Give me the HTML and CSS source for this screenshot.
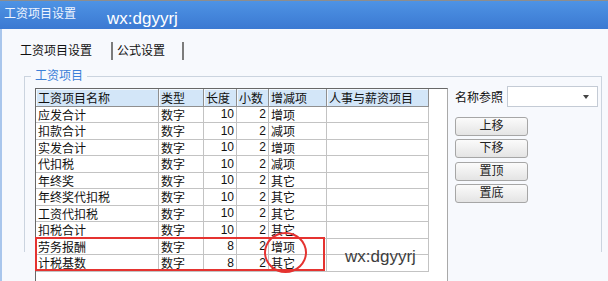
FILE: index.html
```html
<!DOCTYPE html>
<html lang="zh-CN">
<head>
    <meta charset="UTF-8">
    <title>工资项目设置</title>
    <link rel="stylesheet" href="styles.css">
</head>
<body>
    <!-- Title bar -->
    <div class="titlebar">
        <span class="title">工资项目设置</span>
        <span class="title-mark">wx:dgyyrj</span>
    </div>

    <div class="window">
        <!-- Tabs -->
        <div class="tabs">
            <span class="tab tab-first">工资项目设置</span>
            <span class="tab tab-second">公式设置</span>
        </div>

        <!-- Group box -->
        <div class="group">
            <div class="legend">工资项目</div>

            <div class="grid">
                <div class="row head">
                    <div class="cell">工资项目名称</div>
                    <div class="cell">类型</div>
                    <div class="cell">长度</div>
                    <div class="cell">小数</div>
                    <div class="cell">增减项</div>
                    <div class="cell">人事与薪资项目</div>
                </div>
                <div class="row">
                    <div class="cell">应发合计</div><div class="cell">数字</div>
                    <div class="cell num">10</div><div class="cell num">2</div>
                    <div class="cell">增项</div><div class="cell"></div>
                </div>
                <div class="row">
                    <div class="cell">扣款合计</div><div class="cell">数字</div>
                    <div class="cell num">10</div><div class="cell num">2</div>
                    <div class="cell">减项</div><div class="cell"></div>
                </div>
                <div class="row">
                    <div class="cell">实发合计</div><div class="cell">数字</div>
                    <div class="cell num">10</div><div class="cell num">2</div>
                    <div class="cell">增项</div><div class="cell"></div>
                </div>
                <div class="row">
                    <div class="cell">代扣税</div><div class="cell">数字</div>
                    <div class="cell num">10</div><div class="cell num">2</div>
                    <div class="cell">减项</div><div class="cell"></div>
                </div>
                <div class="row">
                    <div class="cell">年终奖</div><div class="cell">数字</div>
                    <div class="cell num">10</div><div class="cell num">2</div>
                    <div class="cell">其它</div><div class="cell"></div>
                </div>
                <div class="row">
                    <div class="cell">年终奖代扣税</div><div class="cell">数字</div>
                    <div class="cell num">10</div><div class="cell num">2</div>
                    <div class="cell">其它</div><div class="cell"></div>
                </div>
                <div class="row">
                    <div class="cell">工资代扣税</div><div class="cell">数字</div>
                    <div class="cell num">10</div><div class="cell num">2</div>
                    <div class="cell">其它</div><div class="cell"></div>
                </div>
                <div class="row">
                    <div class="cell">扣税合计</div><div class="cell">数字</div>
                    <div class="cell num">10</div><div class="cell num">2</div>
                    <div class="cell">其它</div><div class="cell"></div>
                </div>
                <div class="row">
                    <div class="cell">劳务报酬</div><div class="cell">数字</div>
                    <div class="cell num">8</div><div class="cell num">2</div>
                    <div class="cell">增项</div><div class="cell"></div>
                </div>
                <div class="row">
                    <div class="cell">计税基数</div><div class="cell">数字</div>
                    <div class="cell num">8</div><div class="cell num">2</div>
                    <div class="cell">其它</div><div class="cell"></div>
                </div>
            </div>

            <!-- Side controls -->
            <div class="side">
                <div class="ref">
                    <span class="ref-label">名称参照</span>
                    <div class="combo"><span class="arrow"></span></div>
                </div>
                <button class="btn">上移</button>
                <button class="btn">下移</button>
                <button class="btn">置顶</button>
                <button class="btn">置底</button>
            </div>
        </div>
    </div>

    <!-- Annotations drawn over the screenshot -->
    <div class="mark-box"></div>
    <div class="mark-circle"></div>
    <div class="mark-text">wx:dgyyrj</div>
</body>
</html>
```

FILE: styles.css
```css
body {
    margin: 0;
    width: 608px;
    height: 281px;
    overflow: hidden;
    position: relative;
    font-family: "Liberation Sans", "Noto Sans CJK SC", sans-serif;
    font-size: 12px;
    color: #111;
    background-color: #f7f9fd;
}
.titlebar {
    height: 28px;
    border-top: 1px solid #8d8d8d;
    background: linear-gradient(#4e93e4, #3b79d2);
    display: flex;
    align-items: flex-start;
    color: #fff;
}
.title {
    margin: 5px 0 0 4px;
    line-height: 16px;
    color: #eef4ff;
}
.title-mark {
    margin: 8px 0 0 31px;
    font-size: 17px;
    line-height: 20px;
}
.window {
    height: 252px;
    border-left: 2px solid #a9c6ec;
}
.tabs {
    display: flex;
    padding: 13px 0 0 18px;
}
.tab {
    line-height: 18px;
    border-right: 2px solid #7c7c7c;
}
.tab-first {
    padding-right: 19px;
}
.tab-second {
    padding: 0 17px 0 4px;
}
.group {
    position: relative;
    margin: 16px 0 0 22px;
    width: 578px;
    height: 176px;
    box-sizing: border-box;
    border: 1px solid #cbd4df;
    border-bottom: none;
    padding: 10px 0 0 10px;
    display: flex;
    align-items: flex-start;
}
.legend {
    position: absolute;
    top: -8px;
    left: 6px;
    padding: 0 4px;
    line-height: 14px;
    color: #3b80d8;
    background-color: #f7f9fd;
}
.grid {
    margin-top: 1px;
    width: 413px;
    height: 194px;
    box-sizing: border-box;
    border: 1px solid #a9a9a9;
    border-top-color: #686868;
    border-left-color: #686868;
    background-color: #fff;
}
.row {
    display: grid;
    grid-template-columns: 123px 45px 33px 32px 58px 102px;
    height: 16.5px;
}
.cell {
    box-sizing: border-box;
    border-right: 1px solid #c3c3c3;
    border-bottom: 1px solid #c3c3c3;
    padding: 0 2px;
    display: flex;
    align-items: center;
    white-space: nowrap;
    overflow: hidden;
}
.num {
    justify-content: flex-end;
}
.head {
    height: 17.5px;
}
.head .cell {
    background-color: #d3e6f8;
    border-right-color: #8f8f8f;
    border-bottom-color: #8f8f8f;
    box-shadow: inset 1px 1px #f4f9fe;
}
.side {
    margin-left: 7px;
    width: 143px;
    display: flex;
    flex-direction: column;
    align-items: flex-start;
    gap: 3.5px;
}
.ref {
    display: flex;
    align-items: center;
    gap: 4px;
    margin-top: -1px;
    margin-bottom: 6px;
}
.ref-label {
    width: 48px;
}
.combo {
    position: relative;
    width: 91px;
    height: 21px;
    box-sizing: border-box;
    border: 1px solid #c4cbd5;
    background-color: #fff;
}
.arrow {
    position: absolute;
    right: 8px;
    top: 8px;
    border-left: 3.5px solid transparent;
    border-right: 3.5px solid transparent;
    border-top: 4px solid #444;
}
.btn {
    width: 73px;
    height: 19px;
    padding: 0;
    font-family: inherit;
    font-size: 12px;
    line-height: 17px;
    color: #222;
    border: 1px solid #a6a6a6;
    border-radius: 3px;
    background: linear-gradient(#fbfbfb, #e4e4e4);
}
.mark-box {
    position: absolute;
    left: 35px;
    top: 237px;
    width: 290px;
    height: 34px;
    box-sizing: border-box;
    border: 2px solid #e53330;
}
.mark-circle {
    position: absolute;
    left: 264px;
    top: 232px;
    width: 43px;
    height: 41px;
    box-sizing: border-box;
    border: 2px solid #e53330;
    border-radius: 50%;
}
.mark-text {
    position: absolute;
    left: 345px;
    top: 247px;
    font-size: 17px;
    line-height: 20px;
    color: #3e3e3e;
}
```
